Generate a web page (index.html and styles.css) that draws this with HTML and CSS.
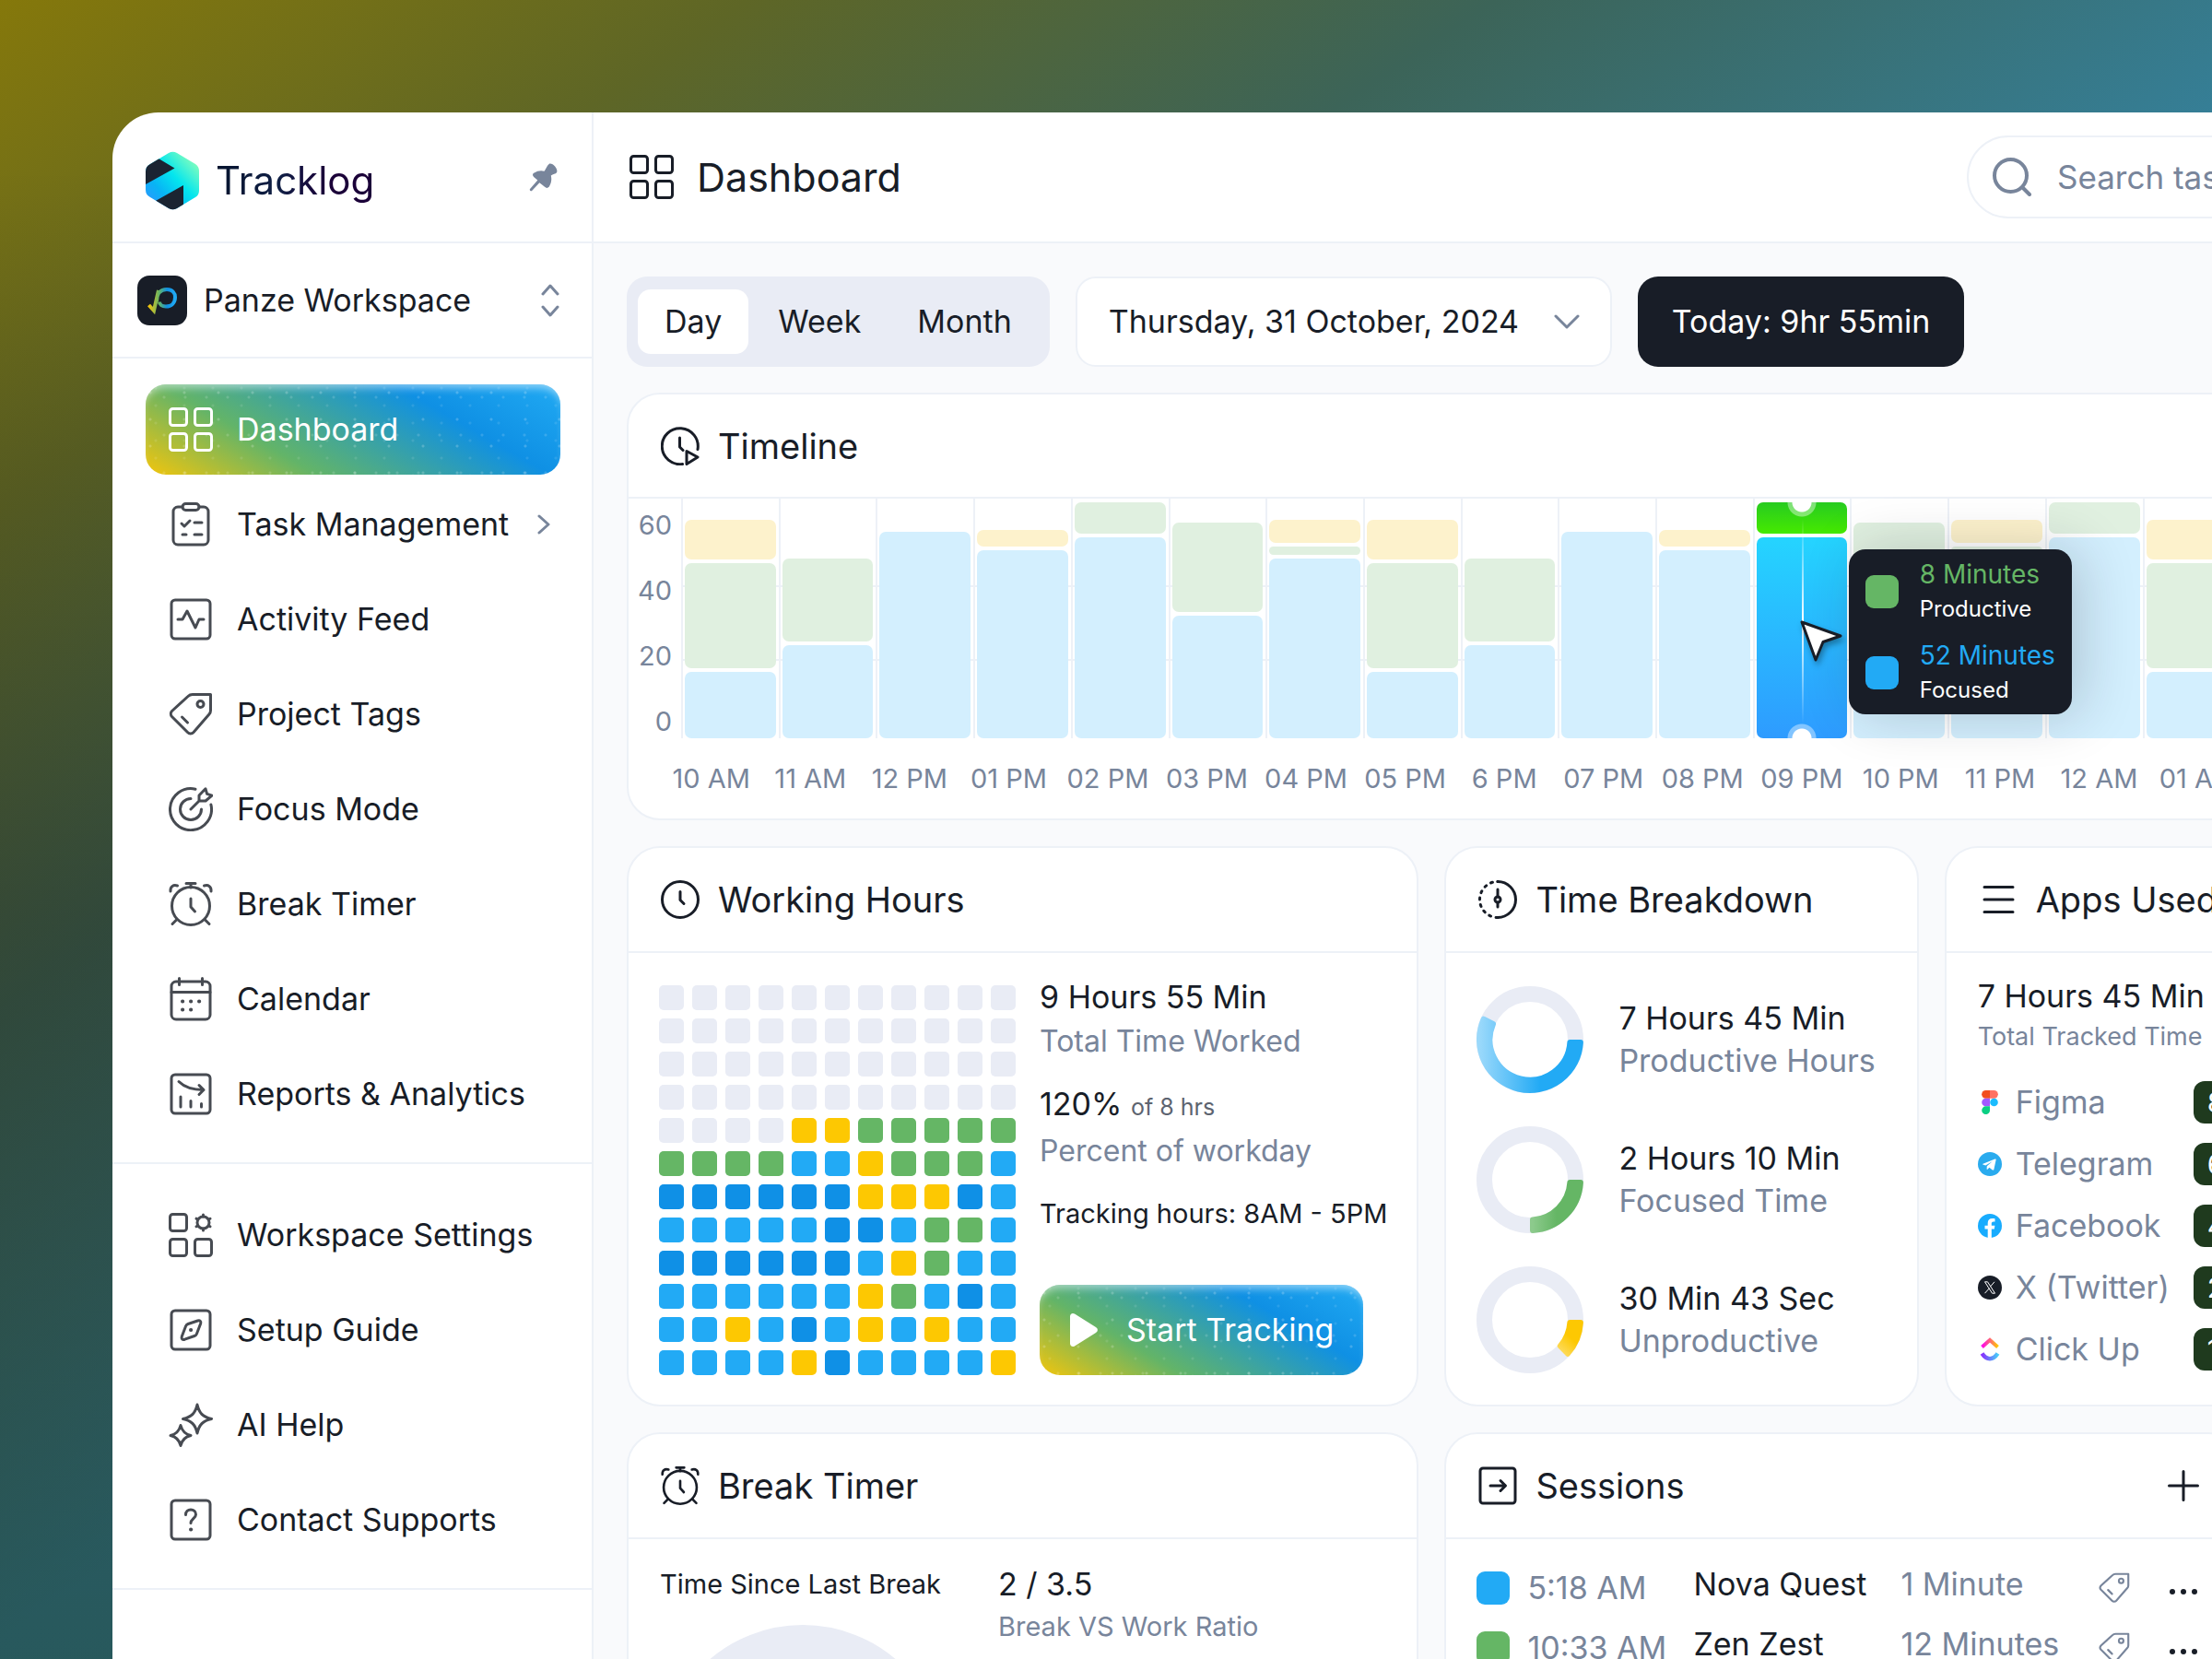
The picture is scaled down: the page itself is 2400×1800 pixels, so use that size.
FILE: index.html
```
<!DOCTYPE html>
<html lang="en">
<head>
  <meta charset="UTF-8" />
  <meta name="viewport" content="width=device-width, initial-scale=1.0"/>
  <title>Tracklog - Dashboard</title>
  <link rel="stylesheet" href="styles.css">
</head>

<body>
  <!-- Icons -->
  <svg class="sprite" aria-hidden="true">
    <symbol id="i-grid" viewBox="0 0 48 48"><rect x="1.5" y="1.5" width="18" height="18" rx="3"/><rect x="28.5" y="1.5" width="18" height="18" rx="3"/><rect x="1.5" y="28.5" width="18" height="18" rx="3"/><rect x="28.5" y="28.5" width="18" height="18" rx="3"/></symbol>
    <symbol id="i-task" viewBox="0 0 48 48"><path d="M15 5H10a5 5 0 0 0-5 5v31a5 5 0 0 0 5 5h28a5 5 0 0 0 5-5V10a5 5 0 0 0-5-5h-5"/><rect x="15" y="1.5" width="18" height="7" rx="3.5"/><path d="M14 23l3 3 6-6M28 22h8M15 35h4M28 35h8"/></symbol>
    <symbol id="i-activity" viewBox="0 0 48 48"><rect x="3" y="3" width="42" height="42" rx="4"/><path d="M10 24h5l5-9 9 18 4-9h5"/></symbol>
    <symbol id="i-tag" viewBox="0 0 48 48"><path d="M45.500 2.500V20a6 6 0 0 1-1.600 4L27 43.500a4.500 4.500 0 0 1-6.500 0L3.500 26.500a4.500 4.500 0 0 1 0-6L21 4.500a7 7 0 0 1 5-2z"/><circle cx="34.500" cy="13" r="3.500"/><path d="M14.500 27l6 6"/></symbol>
    <symbol id="i-focus" viewBox="0 0 48 48"><path d="M29 2.200A22.500 22.500 0 1 0 45.900 19"/><path d="M24 12.500A11.500 11.500 0 1 0 35.500 24"/><path d="M24 24l9-9V9l7-7.200 1.600 5.600L47 9.200 40 15h-7"/></symbol>
    <symbol id="i-alarm" viewBox="0 0 48 48"><circle cx="24" cy="26" r="20.500"/><path d="M19 1.500h10M24 2v4M2 10C1.500 5 5 2.500 9.500 4M46 10c.5-5-3-7.500-7.500-6M4 45.500l5-5M44 45.500l-5-5M24 18v9l4.500 5"/></symbol>
    <symbol id="i-calendar" viewBox="0 0 48 48"><rect x="3" y="5" width="42" height="41" rx="5"/><path d="M3 16.500h42M11.500 1.500v7M36.500 1.500v7"/><path d="M15 26.500h.2M24 26.500h.2M33 26.500h.2M15 35.500h.2M24 35.500h.2" stroke-width="4"/></symbol>
    <symbol id="i-report" viewBox="0 0 48 48"><rect x="3" y="3" width="42" height="42" rx="4"/><path d="M11 10.500c7 7 16 9 27 9M33 14.500l5 5-5 5M13 27v11M24 31.500V38M35.500 34.500V38"/></symbol>
    <symbol id="i-workspace" viewBox="0 0 48 48"><rect x="1.500" y="1.500" width="18" height="18" rx="3"/><rect x="1.500" y="28.500" width="18" height="18" rx="3"/><rect x="28.500" y="28.500" width="18" height="18" rx="3"/><circle cx="37.500" cy="10.500" r="6.500"/><path d="M37.500 2v2M37.500 17v2M30 6.200l1.500.9M43.500 14l1.500.8M30 14.800l1.500-.8M43.500 7l1.500-.8"/></symbol>
    <symbol id="i-guide" viewBox="0 0 48 48"><rect x="3" y="3" width="42" height="42" rx="4"/><path d="M31.500 14L21 17.500a4 4 0 0 0-2.400 2.300L14.300 31c-.8 2.600.6 3.900 3.200 3.200L28 30.500a4 4 0 0 0 2.400-2.300L34.700 17c.7-2.600-.8-3.700-3.200-3z"/><path d="M24 24h.2" stroke-width="4"/></symbol>
    <symbol id="i-sparkle" viewBox="0 0 48 48"><path d="M31 2c2 9 6 13.500 15.500 15.500C37 19.500 33 24 31 33c-2-9-6-13.500-15.500-15.500C25 15.500 29 11 31 2zM13 24.500c1.500 6 4.500 9.500 11 11-6.500 1.500-9.500 4.500-11 11-1.500-6.500-4.500-9.500-11-11 6.500-1.500 9.500-5 11-11z"/></symbol>
    <symbol id="i-help" viewBox="0 0 48 48"><rect x="3" y="3" width="42" height="42" rx="4"/><path d="M18.500 18.500c0-3.500 2.500-5.500 5.500-5.500s5.500 2 5.500 5.200c0 4-5.500 5-5.500 9.300"/><path d="M24 34.500h.2" stroke-width="4"/></symbol>
    <symbol id="i-timeline" viewBox="0 0 42 42"><path d="M40 24.500A19.500 19.500 0 1 0 23.500 40.500M20.500 12v10l3.500 3.500M28 26.500l12 6.500-12 7.500z"/></symbol>
    <symbol id="i-clock" viewBox="0 0 42 42"><circle cx="21" cy="21" r="19.500"/><path d="M21 12.500v9l4 4"/></symbol>
    <symbol id="i-breakdown" viewBox="0 0 42 42"><path d="M21 1.500a19.500 19.500 0 0 1 0 39"/><path d="M21 40.500a19.500 19.500 0 0 1 0-39" stroke-dasharray="2 5.600"/><circle cx="21" cy="21" r="3"/><path d="M21 10v8M21 24v5"/></symbol>
    <symbol id="i-menu" viewBox="0 0 42 42"><path d="M6 7.500h31M6 21h31M6 34.500h31"/></symbol>
    <symbol id="i-session" viewBox="0 0 42 42"><rect x="2" y="2" width="38" height="38" rx="3"/><path d="M13 21h16M24 15.500l5.500 5.500-5.500 5.500"/></symbol>
    <symbol id="i-search" viewBox="0 0 42 42"><circle cx="19.500" cy="19.500" r="17.500"/><path d="M33 33l7 7"/></symbol>
    <symbol id="i-down" viewBox="0 0 28 16"><path d="M2 2l12 12L26 2"/></symbol>
    <symbol id="i-right" viewBox="0 0 14 22"><path d="M2 2l10 9-10 9"/></symbol>
    <symbol id="i-updown" viewBox="0 0 20 36"><path d="M2 11l8-9 8 9M2 25l8 9 8-9"/></symbol>
    <symbol id="i-plus" viewBox="0 0 34 34"><path d="M17 1.500v31M1.500 17h31"/></symbol>
  </svg>

  <div class="app">
    <aside class="sidebar">
      <div class="brand">
        <svg class="brand-logo" viewBox="0 0 60 64">
          <defs>
            <linearGradient id="logoFill" x1="0" y1="1" x2="1" y2="0">
              <stop offset="0" stop-color="#3a8dff"/><stop offset=".3" stop-color="#08b4f5"/><stop offset=".55" stop-color="#04e6ee"/><stop offset=".85" stop-color="#7bfcc0"/><stop offset="1" stop-color="#9cf7c0"/>
            </linearGradient>
            <clipPath id="logoClip"><path d="M25 2a9 9 0 0 1 9 0l20 12a9 9 0 0 1 4 8v20a9 9 0 0 1-4 8L34 62a9 9 0 0 1-9 0L5 50a9 9 0 0 1-5-8V22a9 9 0 0 1 5-8z"/></clipPath>
          </defs>
          <g clip-path="url(#logoClip)">
            <path fill="url(#logoFill)" d="M0 0h60v64H0z"/>
            <path fill="#1b2432" d="M0 12l14-4 17.500 10.500L0 36zM0 60l41-23v27H0z"/>
          </g>
        </svg>
        <span class="brand-name">Tracklog</span>
        <button type="button" class="icon-button" aria-label="Pin sidebar">
          <svg class="pin" viewBox="0 0 30 30"><path fill="#78859b" d="M21 1c1-1 3.500-.3 5.500 1.700s3.700 5 2.500 7.300c-1 1.500-4 1.500-6 3 1 4 .5 8-2 12-1.500 1.500-3 1.500-4.500 0L11 20.500 3 29c-1 1-3-.5-2-2l8-9L5 14.500c-1.500-1.500-1.500-3 0-4 4-2.500 7.500-3 11-2C17.500 6.500 19 2.500 21 1z"/></svg>
        </button>
      </div>

      <button type="button" class="workspace">
        <svg class="workspace-logo" viewBox="0 0 54 54">
          <defs><linearGradient id="panze"><stop offset="0" stop-color="#f3c50c"/><stop offset=".4" stop-color="#63b468"/><stop offset=".7" stop-color="#0f90e4"/><stop offset="1" stop-color="#21aaf3"/></linearGradient></defs>
          <rect width="54" height="54" rx="13" fill="#181d27"/>
          <path d="M12.500 32l5.500 6 5-22M21 28c0-8 4-13 11-13 6 0 9 4 9 8.500 0 6-4 10-10 10-4 0-7-2-7-5" fill="none" stroke="url(#panze)" stroke-width="4"/>
        </svg>
        <span>Panze Workspace</span>
        <svg class="icon updown"><use href="#i-updown"/></svg>
      </button>

      <nav class="nav">
        <a href="#" class="nav-item active"><svg class="icon"><use href="#i-grid"/></svg>Dashboard</a>
        <a href="#" class="nav-item"><svg class="icon"><use href="#i-task"/></svg>Task Management<svg class="icon chevron"><use href="#i-right"/></svg></a>
        <a href="#" class="nav-item"><svg class="icon"><use href="#i-activity"/></svg>Activity Feed</a>
        <a href="#" class="nav-item"><svg class="icon"><use href="#i-tag"/></svg>Project Tags</a>
        <a href="#" class="nav-item"><svg class="icon"><use href="#i-focus"/></svg>Focus Mode</a>
        <a href="#" class="nav-item"><svg class="icon"><use href="#i-alarm"/></svg>Break Timer</a>
        <a href="#" class="nav-item"><svg class="icon"><use href="#i-calendar"/></svg>Calendar</a>
        <a href="#" class="nav-item"><svg class="icon"><use href="#i-report"/></svg>Reports &amp; Analytics</a>
      </nav>

      <nav class="nav">
        <a href="#" class="nav-item"><svg class="icon"><use href="#i-workspace"/></svg>Workspace Settings</a>
        <a href="#" class="nav-item"><svg class="icon"><use href="#i-guide"/></svg>Setup Guide</a>
        <a href="#" class="nav-item"><svg class="icon"><use href="#i-sparkle"/></svg>AI Help</a>
        <a href="#" class="nav-item"><svg class="icon"><use href="#i-help"/></svg>Contact Supports</a>
      </nav>
    </aside>

    <main class="main">
      <header class="topbar">
        <svg class="icon"><use href="#i-grid"/></svg>
        <h1>Dashboard</h1>
        <label class="search">
          <svg class="icon"><use href="#i-search"/></svg>
          <input type="search" placeholder="Search tasks, projects..." aria-label="Search" />
        </label>
      </header>

      <div class="content">
        <div class="toolbar">
          <div class="segmented">
            <button type="button" class="selected">Day</button>
            <button type="button">Week</button>
            <button type="button">Month</button>
          </div>
          <div class="date-picker">
            <select aria-label="Date">
              <option>Thursday, 31 October, 2024</option>
            </select>
            <svg class="icon"><use href="#i-down"/></svg>
          </div>
          <button type="button" class="today">Today: 9hr 55min</button>
        </div>

        <section class="card timeline">
          <div class="card-head"><svg class="icon"><use href="#i-timeline"/></svg><h2>Timeline</h2></div>
          <div class="chart">
            <div class="axis-y"><span>60</span><span>40</span><span>20</span><span>0</span></div>
            <div class="plot" id="plot"></div>
          </div>
          <div class="axis-x" id="axisX"></div>
        </section>

        <div class="row row-top">
          <section class="card">
            <div class="card-head"><svg class="icon"><use href="#i-clock"/></svg><h2>Working Hours</h2></div>
            <div class="working">
              <div class="cells" id="cells"></div>
              <div class="working-info">
                <p class="value">9 Hours 55 Min</p>
                <p class="label">Total Time Worked</p>
                <p class="value spaced">120% <small>of 8 hrs</small></p>
                <p class="label">Percent of workday</p>
                <p class="note">Tracking hours: 8AM - 5PM</p>
                <button type="button" class="start">
                  <svg viewBox="0 0 32 38"><path fill="#fff" d="M1 4.500C1 1.500 3.500 0 6 1.500l23 14.500c2.500 1.500 2.500 4.500 0 6L6 36.500c-2.500 1.500-5 0-5-3z"/></svg>
                  Start Tracking
                </button>
              </div>
            </div>
          </section>

          <section class="card">
            <div class="card-head"><svg class="icon"><use href="#i-breakdown"/></svg><h2>Time Breakdown</h2></div>
            <div class="breakdown">
              <div class="breakdown-item">
                <svg class="ring" viewBox="0 0 116 116">
                  <defs><linearGradient id="ringBlue"><stop offset="0" stop-color="#9bd9fb"/><stop offset=".6" stop-color="#22aaf5"/></linearGradient></defs>
                  <circle cx="58" cy="58" r="49.500"/>
                  <path d="M112.900 61A55 55 0 1 1 7.700 35.700L18 41A43.500 43.500 0 1 0 101.400 61z" fill="url(#ringBlue)" stroke="url(#ringBlue)"/>
                </svg>
                <div><p class="value">7 Hours 45 Min</p><p class="label">Productive Hours</p></div>
              </div>
              <div class="breakdown-item">
                <svg class="ring" viewBox="0 0 116 116">
                  <defs><linearGradient id="ringGreen"><stop offset="0" stop-color="#8cca8c"/><stop offset=".5" stop-color="#65b665"/></linearGradient></defs>
                  <circle cx="58" cy="58" r="49.500"/>
                  <path d="M112.900 61A55 55 0 0 1 61 112.900V101.400A43.500 43.500 0 0 0 101.400 61z" fill="url(#ringGreen)" stroke="url(#ringGreen)"/>
                </svg>
                <div><p class="value">2 Hours 10 Min</p><p class="label">Focused Time</p></div>
              </div>
              <div class="breakdown-item">
                <svg class="ring" viewBox="0 0 116 116">
                  <defs><linearGradient id="ringYellow" x1="0" y1="1" x2=".6" y2="0"><stop offset="0" stop-color="#fedd66"/><stop offset=".6" stop-color="#fdc802"/></linearGradient></defs>
                  <circle cx="58" cy="58" r="49.500"/>
                  <path d="M112.900 61A55 55 0 0 1 98.900 94.700L90.800 86.500A43.500 43.500 0 0 0 101.400 61z" fill="url(#ringYellow)" stroke="url(#ringYellow)"/>
                </svg>
                <div><p class="value">30 Min 43 Sec</p><p class="label">Unproductive</p></div>
              </div>
            </div>
          </section>

          <section class="card">
            <div class="card-head"><svg class="icon"><use href="#i-menu"/></svg><h2>Apps Used</h2></div>
            <div class="apps">
              <p class="value">7 Hours 45 Min</p>
              <p class="label tracked">Total Tracked Time</p>
              <ul>
                <li>
                  <svg viewBox="0 0 26 26"><path fill="#f24e1e" d="M13 0H8.500a4.300 4.300 0 0 0 0 8.700H13z"/><path fill="#ff7262" d="M13 0h4.500a4.300 4.300 0 0 1 0 8.700H13z"/><path fill="#a259ff" d="M13 8.700H8.500a4.300 4.300 0 0 0 0 8.600H13z"/><circle fill="#1abcfe" cx="17.500" cy="13" r="4.300"/><path fill="#0acf83" d="M8.500 17.300H13v4.400a4.400 4.400 0 1 1-4.500-4.400z"/></svg>
                  <span>Figma</span><b>85%</b>
                </li>
                <li>
                  <svg viewBox="0 0 26 26"><circle cx="13" cy="13" r="13" fill="#2aabee"/><path fill="#fff" d="M5.500 12.700l13-5.200c.8-.3 1.300.1 1.100 1l-2.200 10.300c-.2.900-.8 1-1.500.6l-3.500-2.600-2 1.900c-.4.300-.8.200-.8-.4l.2-3 6-5.400-7.500 4.600-2.700-.9c-.7-.2-.7-.6-.1-.9z"/></svg>
                  <span>Telegram</span><b>60%</b>
                </li>
                <li>
                  <svg viewBox="0 0 26 26"><circle cx="13" cy="13" r="13" fill="#18acfe"/><path fill="#fff" d="M17.800 16.500l.6-3.700h-3.600v-2.400c0-1 .5-2 2.100-2h1.600V5.200s-1.500-.2-2.900-.2c-3 0-4.900 1.800-4.900 5v2.800H7.500v3.700h3.200V26h4.100v-9.500z"/></svg>
                  <span>Facebook</span><b>45%</b>
                </li>
                <li>
                  <svg viewBox="0 0 26 26"><circle cx="13" cy="13" r="13" fill="#181d27"/><path fill="none" stroke="#fff" d="M7.500 6.800h3l8 12.400h-3zM18 6.800l-4.600 5.200M12.400 13.800l-4.900 5.400"/></svg>
                  <span>X (Twitter)</span><b>20%</b>
                </li>
                <li>
                  <svg viewBox="0 0 26 26">
                    <defs><linearGradient id="cuTop"><stop offset="0" stop-color="#ff02f0"/><stop offset="1" stop-color="#ffc800"/></linearGradient><linearGradient id="cuLow"><stop offset="0" stop-color="#8930fd"/><stop offset="1" stop-color="#49ccf9"/></linearGradient></defs>
                    <path fill="none" stroke="url(#cuTop)" stroke-width="4" d="M4.500 10.500L13 3l8.500 7.500"/><path fill="none" stroke="url(#cuLow)" stroke-width="4.500" d="M4.500 17.500c5 7.500 12 7.500 17 0"/>
                  </svg>
                  <span>Click Up</span><b>10%</b>
                </li>
              </ul>
            </div>
          </section>
        </div>

        <div class="row row-bottom">
          <section class="card">
            <div class="card-head"><svg class="icon"><use href="#i-alarm"/></svg><h2>Break Timer</h2></div>
            <div class="break">
              <div>
                <p class="note">Time Since Last Break</p>
                <svg class="gauge" viewBox="0 0 310 155"><path d="M26 155a129 129 0 0 1 258 0" fill="none" stroke="#e9ecf5" stroke-width="52"/></svg>
              </div>
              <div>
                <p class="value">2 / 3.5</p>
                <p class="label ratio">Break VS Work Ratio</p>
              </div>
            </div>
          </section>

          <section class="card">
            <div class="card-head">
              <svg class="icon"><use href="#i-session"/></svg><h2>Sessions</h2>
              <button type="button" class="icon-button" aria-label="Add session"><svg class="icon plus"><use href="#i-plus"/></svg></button>
            </div>
            <table class="sessions">
              <tr>
                <td class="mark"><i class="swatch blue"></i></td><td class="time">5:18 AM</td><td class="task">Nova Quest</td><td class="length">1 Minute</td>
                <td class="tag"><svg class="icon"><use href="#i-tag"/></svg></td><td><button type="button" class="more" aria-label="More"><i></i><i></i><i></i></button></td>
              </tr>
              <tr>
                <td class="mark"><i class="swatch green"></i></td><td class="time">10:33 AM</td><td class="task">Zen Zest</td><td class="length">12 Minutes</td>
                <td class="tag"><svg class="icon"><use href="#i-tag"/></svg></td><td><button type="button" class="more" aria-label="More"><i></i><i></i><i></i></button></td>
              </tr>
            </table>
          </section>

          <section class="card"></section>
        </div>
      </div>
    </main>
  </div>

  <script>
    // [color, height in px] from top to bottom
    const shapes = {
      a: [["yellow", 43], ["green", 114], ["blue", 72]],
      b: [["green", 90], ["blue", 101]],
      c: [["blue", 224]],
      d: [["yellow", 18], ["blue", 204]],
      e: [["green", 34], ["blue", 218]],
      f: [["green", 97], ["blue", 133]],
      g: [["yellow", 25], ["green", 9], ["blue", 195]]
    };
    const columns = "abcdefgabcdefgeabcde".split("");
    const hours = ["10 AM", "11 AM", "12 PM", "01 PM", "02 PM", "03 PM", "04 PM", "05 PM", "6 PM", "07 PM",
      "08 PM", "09 PM", "10 PM", "11 PM", "12 AM", "01 AM", "02 AM", "03 AM", "04 AM", "05 AM"];
    const current = 11;

    const tooltip = `
      <span class="hairline"></span>
      <svg class="cursor" viewBox="0 0 48 50"><path d="M3 3l42 15-19 6.500L18 44z" fill="#fff" stroke="#181d27" stroke-width="3" stroke-linejoin="round"/></svg>
      <div class="tooltip">
        <div><i class="swatch green"></i><p><strong class="text-green">8 Minutes</strong>Productive</p></div>
        <div><i class="swatch blue"></i><p><strong class="text-blue">52 Minutes</strong>Focused</p></div>
      </div>`;

    document.getElementById("plot").innerHTML = columns.map((key, i) => {
      const bars = shapes[key].map(([color, h]) => `<div class="bar ${color}" style="height:${h}px"></div>`).join("");
      return `<div class="col ${i === current ? "current" : ""}">${bars}${i === current ? tooltip : ""}</div>`;
    }).join("");

    document.getElementById("axisX").innerHTML = hours.map(h => `<span>${h}</span>`).join("");

    // working hours heat map: n none, y unproductive, g focused, b / d productive
    const cells = [
      "nnnnnnnnnnn",
      "nnnnnnnnnnn",
      "nnnnnnnnnnn",
      "nnnnnnnnnnn",
      "nnnnyyggggg",
      "ggggbbygggb",
      "ddddddyyydb",
      "bbbbbddbggb",
      "ddddddbygbb",
      "bbbbbbygbdb",
      "bbybdbybybb",
      "bbbbydbbbby"
    ];
    document.getElementById("cells").innerHTML = cells.join("").split("").map(c => `<i class="cell-${c}"></i>`).join("");
  </script>
</body>
</html>
```
FILE: styles.css
```
* {
  box-sizing: border-box;
}

body {
  margin: 0;
  height: 100vh;
  overflow: hidden;
  font-family: Inter, sans-serif;
  font-size: 34px;
  line-height: 46px;
  color: #181d27;
  background:
    linear-gradient(180deg, rgba(25,15,0,0) 10%, rgba(25,15,0,0.32) 55%, rgba(20,30,0,0.4) 100%),
    linear-gradient(146deg, #85780b 0%, #5e6626 16%, #3c6458 32%, #35809a 52%, #35829b 100%);
}

h1, h2, p, ul {
  margin: 0;
  padding: 0;
  font-weight: 400;
}

button, input, select {
  font: inherit;
  color: inherit;
  border: none;
  background: none;
  padding: 0;
}

button {
  cursor: pointer;
}

.sprite {
  position: absolute;
  width: 0;
  height: 0;
}

.icon {
  width: 48px;
  height: 48px;
  flex: none;
  fill: none;
  stroke: currentColor;
  stroke-width: 3;
  stroke-linecap: round;
  stroke-linejoin: round;
}

.icon-button {
  display: flex;
  margin-left: auto;
}

/* the window runs past the right and bottom edge of the screen */
.app {
  display: flex;
  min-height: 100vh;
  margin: 122px -491px 0 122px;
  background: #fff;
  border-radius: 50px 0 0 0;
  overflow: hidden;
}

/* Sidebar */
.sidebar {
  flex: none;
  width: 522px;
  border-right: 2px solid #edf1f7;
}

.brand {
  display: flex;
  align-items: center;
  height: 142px;
  padding: 8px 37px 0 36px;
  border-bottom: 2px solid #edf1f7;
}

.brand-logo {
  width: 60px;
  height: 64px;
  margin-right: 16px;
}

.brand-name {
  font-size: 42px;
  line-height: 60px;
  background: linear-gradient(90deg, #06142e, #101f45 40%, #1a0038 70%);
  background-clip: text;
  color: transparent;
}

.pin {
  width: 31px;
  height: 31px;
  margin-bottom: 8px;
}

.workspace {
  display: flex;
  align-items: center;
  gap: 18px;
  width: 100%;
  height: 125px;
  padding: 0 35px 0 27px;
  border-bottom: 2px solid #edf1f7;
}

.workspace-logo {
  width: 54px;
  height: 54px;
}

.updown {
  width: 20px;
  height: 36px;
  margin-left: auto;
  color: #78859b;
}

.nav {
  display: flex;
  flex-direction: column;
  gap: 5px;
  padding: 28px 34px 25px 36px;
  border-bottom: 2px solid #edf1f7;
}

.nav-item {
  display: flex;
  align-items: center;
  height: 98px;
  padding: 0 11px 0 25px;
  border-radius: 22px;
  color: #181d27;
  text-decoration: none;
}

.nav-item .icon {
  margin-right: 26px;
  color: #474b52;
}

.nav-item .chevron {
  width: 14px;
  height: 22px;
  margin: 0 0 0 auto;
  color: #78859b;
}

.nav-item.active,
.start {
  color: #fff;
  background:
    radial-gradient(circle at 5px 9px, rgba(255,255,255,0.2) 1px, transparent 2px) 0 0 / 37px 29px,
    radial-gradient(circle at 20px 14px, rgba(255,255,255,0.15) 1px, transparent 2px) 0 0 / 23px 41px,
    radial-gradient(circle at 11px 4px, rgba(255,255,255,0.1) 1px, transparent 2px) 0 0 / 31px 19px,
    linear-gradient(30deg, #f3c50c 0%, #63b468 30%, #0f90e4 71%, #21aaf3 100%);
  box-shadow: inset 0 8px 8px -4px rgba(255,255,255,0.5);
}

.nav-item.active .icon {
  color: #fff;
}

/* Main */
.main {
  flex: 1;
  min-width: 0;
  background: #f9fafc;
}

.topbar {
  display: flex;
  align-items: center;
  gap: 25px;
  height: 142px;
  padding: 0 37px 0 39px;
  background: #fff;
  border-bottom: 2px solid #edf1f7;
}

.topbar h1 {
  font-size: 43px;
}

.search {
  display: flex;
  align-items: center;
  gap: 28px;
  width: 720px;
  height: 90px;
  margin-left: auto;
  padding: 0 26px;
  border: 2px solid #edf1f7;
  border-radius: 45px;
  color: #78859b;
}

.search .icon {
  width: 42px;
  height: 42px;
  stroke-width: 4;
}

.search input {
  flex: 1;
  font-size: 35px;
  outline: none;
}

.search input::placeholder {
  color: #78859b;
}

.content {
  display: flex;
  flex-direction: column;
  gap: 28px;
  padding: 36px;
}

/* Toolbar */
.toolbar {
  display: flex;
  gap: 28px;
  height: 98px;
}

.segmented {
  display: flex;
  gap: 3px;
  padding: 14px 12px;
  background: #e9ecf5;
  border-radius: 22px;
}

.segmented button {
  padding: 0 29px;
  border-radius: 14px;
}

.segmented .selected {
  background: #fff;
}

.date-picker {
  position: relative;
  display: flex;
}

.date-picker select {
  appearance: none;
  padding: 0 98px 0 34px;
  background: #fff;
  border: 2px solid #edf1f7;
  border-radius: 22px;
}

.date-picker .icon {
  position: absolute;
  right: 35px;
  top: 41px;
  width: 28px;
  height: 16px;
  color: #78859b;
  pointer-events: none;
}

.today {
  padding: 0 37px;
  color: #fff;
  background: #181d27;
  border-radius: 22px;
}

/* Cards */
.card {
  min-width: 0;
  background: #fff;
  border: 2px solid #edf1f7;
  border-radius: 36px;
}

.card-head {
  display: flex;
  align-items: center;
  gap: 20px;
  height: 114px;
  padding: 0 35px;
  border-bottom: 2px solid #edf1f7;
}

.card-head h2 {
  font-size: 38px;
}

.card-head .icon {
  width: 42px;
  height: 42px;
}

.card-head .plus {
  width: 34px;
  height: 34px;
  margin-right: 9px;
}

.value {
  color: #181d27;
}

.label {
  color: #78859b;
}

.note {
  font-size: 29px;
}

.swatch {
  display: block;
  flex: none;
  width: 36px;
  height: 36px;
  border-radius: 9px;
}

.swatch.green {
  background: #65b665;
}

.swatch.blue {
  background: #22aaf5;
}

/* Timeline */
.timeline .card-head {
  height: 113px;
}

.chart {
  display: flex;
  height: 260px;
}

.axis-y {
  display: flex;
  flex-direction: column;
  justify-content: space-between;
  width: 57px;
  margin-bottom: -5px;
  padding: 6px 10px 0 0;
  font-size: 29px;
  text-align: right;
  color: #78859b;
}

.plot {
  flex: 1;
  display: flex;
  background:
    linear-gradient(#edf1f7, #edf1f7) 0 94px / 100% 2px no-repeat,
    linear-gradient(#edf1f7, #edf1f7) 0 174px / 100% 2px no-repeat;
}

.col {
  flex: 1;
  display: flex;
  flex-direction: column;
  justify-content: flex-end;
  gap: 4px;
  padding: 0 3px 0 2px;
  border-left: 2px solid #edf1f7;
}

.bar {
  border-radius: 7px;
}

.bar.yellow {
  background: #fdf2cc;
}

.bar.green {
  background: #e0f0e0;
}

.bar.blue {
  background: #d3effe;
}

.current {
  position: relative;
}

.current .bar.green {
  background:
    radial-gradient(circle at 50% 0, #fff 10px, rgba(255,255,255,0.4) 11px, rgba(255,255,255,0.4) 15px, transparent 16px),
    linear-gradient(#27cb20, #46ea00);
}

.current .bar.blue {
  background:
    radial-gradient(circle at 50% 100%, #fff 10px, rgba(255,255,255,0.4) 11px, rgba(255,255,255,0.4) 15px, transparent 16px),
    linear-gradient(#25d4ff, #2e9bff);
}

.hairline {
  position: absolute;
  left: 50%;
  top: 22px;
  bottom: 16px;
  width: 2px;
  margin-left: -1px;
  background: linear-gradient(transparent, #fff 50%, transparent);
}

.cursor {
  position: absolute;
  left: 48px;
  top: 131px;
  width: 48px;
  height: 50px;
  z-index: 2;
  filter: drop-shadow(2px 4px 3px rgba(0,0,0,0.35));
}

.tooltip {
  position: absolute;
  left: 102px;
  top: 55px;
  z-index: 1;
  display: flex;
  flex-direction: column;
  gap: 14px;
  width: 242px;
  padding: 9px 18px 8px;
  font-size: 24px;
  line-height: 37px;
  color: #fff;
  background: #181d27;
  border-radius: 18px;
  box-shadow: 10px 0 60px rgba(24,29,39,0.2);
}

.tooltip div {
  display: flex;
  align-items: center;
  gap: 23px;
}

.tooltip strong {
  display: block;
  font-size: 28px;
  font-weight: 400;
  white-space: nowrap;
}

.text-green {
  color: #65b665;
}

.text-blue {
  color: #22aaf5;
}

.axis-x {
  display: flex;
  height: 87px;
  padding-left: 36px;
  margin-right: -16px;
  font-size: 29px;
  line-height: 87px;
  text-align: center;
  color: #78859b;
}

.axis-x span {
  flex: 1 0 0;
  white-space: nowrap;
}

/* Rows */
.row {
  display: grid;
  gap: 28px;
}

.row-top {
  grid-template-columns: 859fr 514fr 745fr;
}

.row-bottom {
  grid-template-columns: 859fr 864fr 395fr;
}

.working {
  display: flex;
  gap: 26px;
  padding: 35px 0 32px 33px;
}

.cells {
  display: grid;
  grid-template-columns: repeat(11, 27px);
  grid-auto-rows: 27px;
  gap: 9px;
}

.cells i {
  border-radius: 5px;
}

.cell-n {
  background: #e9ecf5;
}

.cell-y {
  background: #fdc802;
}

.cell-g {
  background: #65b665;
}

.cell-b {
  background: #22aaf5;
}

.cell-d {
  background: #0f90e6;
}

.working-info {
  display: flex;
  flex-direction: column;
  align-items: flex-start;
  margin-top: -11px;
  line-height: 48px;
  white-space: nowrap;
}

.working-info .label {
  font-size: 32px;
}

.working-info .spaced,
.working-info .note {
  margin-top: 20px;
}

.working-info small {
  font-size: 25px;
  color: #5d6470;
}

.start {
  display: flex;
  align-items: center;
  gap: 30px;
  height: 98px;
  margin-top: auto;
  padding: 0 32px;
  border-radius: 22px;
}

.start svg {
  width: 32px;
  height: 38px;
}

.breakdown {
  display: flex;
  flex-direction: column;
  gap: 36px;
  padding: 36px 0 0 33px;
}

.breakdown-item {
  display: flex;
  align-items: center;
  gap: 38px;
  white-space: nowrap;
}

.ring {
  width: 116px;
  height: 116px;
}

.ring circle {
  fill: none;
  stroke: #e9ecf5;
  stroke-width: 17;
}

.ring path {
  stroke-width: 6;
  stroke-linejoin: round;
}

.apps {
  padding: 24px 34px 0;
}

.apps .tracked {
  font-size: 27px;
  line-height: 42px;
}

.apps ul {
  list-style: none;
  margin-top: 16px;
}

.apps li {
  display: grid;
  grid-template-columns: 26px 178px auto;
  align-items: center;
  justify-content: start;
  gap: 0 15px;
  height: 67px;
  color: #78859b;
}

.apps li svg {
  width: 26px;
  height: 26px;
}

.apps b {
  padding: 0 15px;
  font-size: 30px;
  font-weight: 400;
  color: #fff;
  background: #1f3a1e;
  border-radius: 12px;
}

.break {
  display: grid;
  grid-template-columns: 310px 1fr;
  gap: 57px;
  padding: 26px 34px;
  white-space: nowrap;
}

.break .ratio {
  font-size: 29px;
}

.gauge {
  display: block;
  width: 310px;
  margin-top: 21px;
}

.sessions {
  width: 100%;
  margin-top: 20px;
  border-collapse: collapse;
  table-layout: fixed;
}

.sessions td {
  height: 65px;
  padding: 0;
  white-space: nowrap;
}

.sessions .mark {
  width: 88px;
  padding-left: 33px;
}

.sessions .time {
  width: 180px;
  color: #78859b;
}

.sessions .task {
  width: 225px;
  padding-bottom: 8px;
}

.sessions .length {
  width: 215px;
  padding-bottom: 8px;
  color: #78859b;
}

.sessions .tag {
  width: 77px;
  color: #78859b;
}

.sessions .icon {
  display: block;
  width: 34px;
  height: 34px;
}

.more {
  display: flex;
  gap: 6px;
  padding-top: 8px;
}

.more i {
  width: 6px;
  height: 6px;
  border-radius: 50%;
  background: #181d27;
}
```
